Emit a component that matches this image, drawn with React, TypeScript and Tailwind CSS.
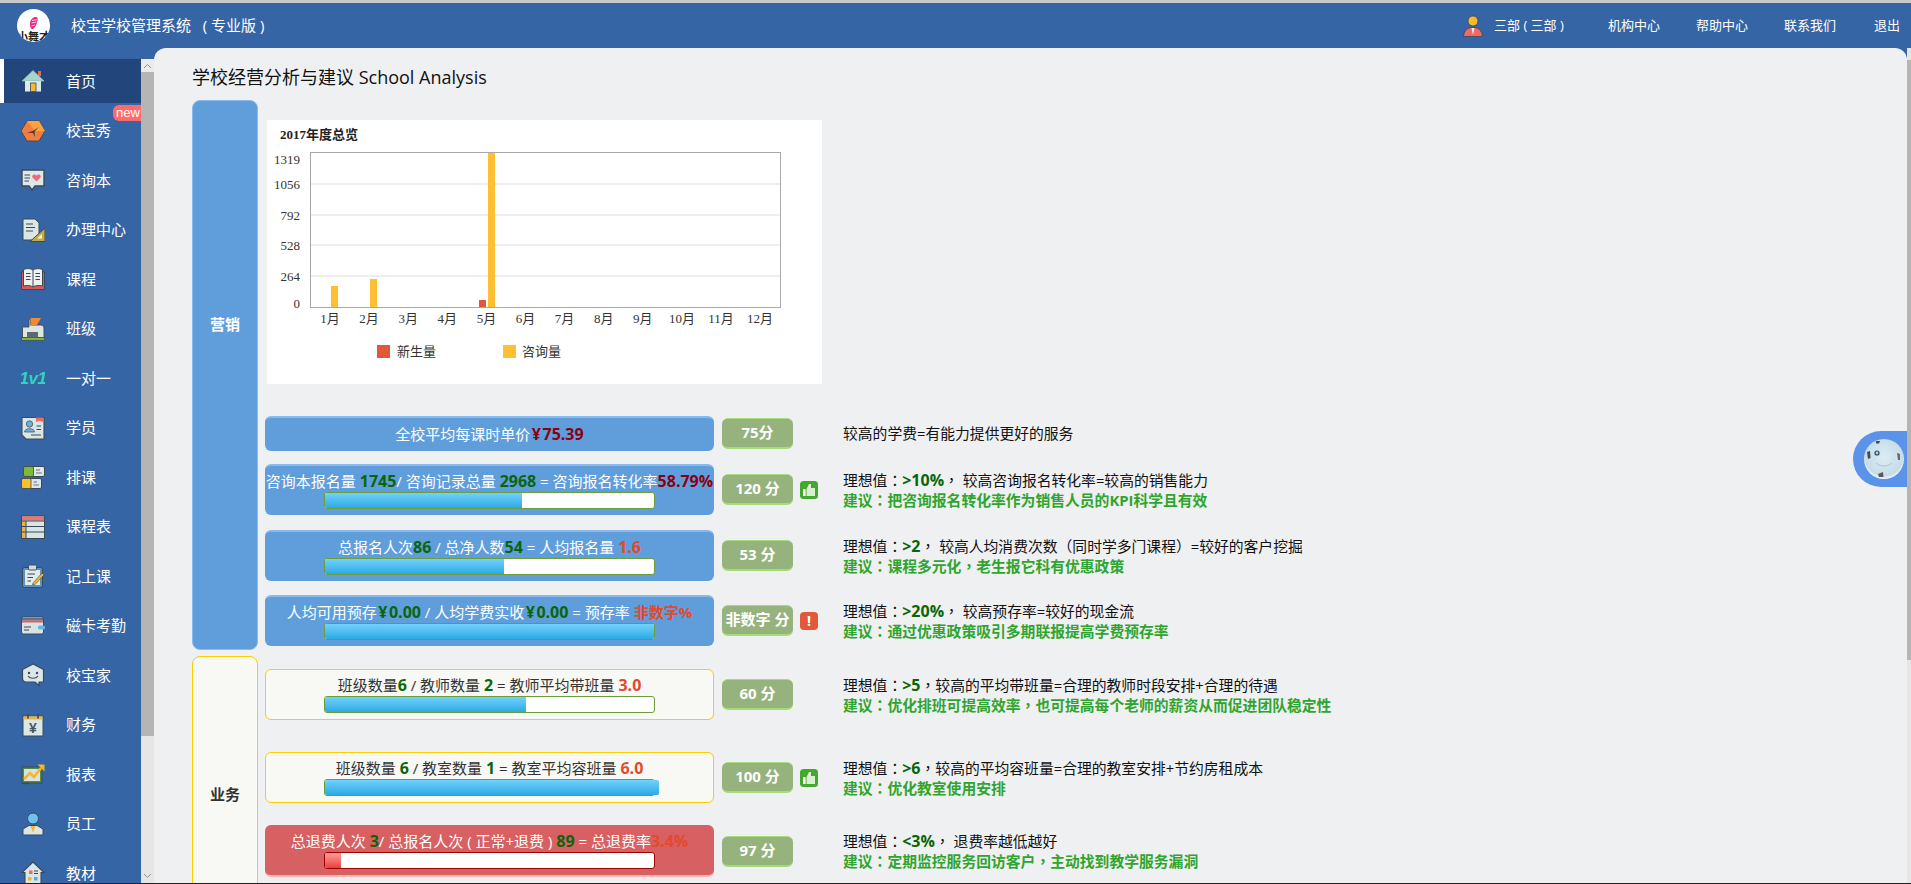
import React from 'react';

const CJK = '"Open Sans","Noto Sans CJK SC",sans-serif';

const Ico: React.FC<{ children: React.ReactNode }> = ({ children }) => (
  <svg viewBox="0 0 24 24" width={24} height={24} className="shrink-0">
    {children}
  </svg>
);

const ink = '#3c4858';

const icons: Record<string, React.ReactNode> = {
  home: (
    <Ico>
      <rect x="17" y="2" width="3" height="5" fill="#e8685f" />
      <path d="M12 1.5 L23 12 H1 Z" fill="#a9d3cc" stroke="#8fb9b3" strokeWidth="0.8" />
      <rect x="4" y="12" width="16" height="10.5" fill="#dfe9e6" />
      <rect x="9.5" y="14" width="5.5" height="8.5" fill="#f6bb2e" stroke={ink} strokeWidth="0.8" />
    </Ico>
  ),
  show: (
    <Ico>
      <path d="M6 2 H18 L24 12 L18 22 H6 L0 12 Z" fill="#f47c3c" stroke={ink} strokeWidth="0.9" />
      <path d="M6 2 H18 L24 12 H14 Z" fill="#f9a23f" />
      <path d="M12 12 L6 13.5 L12 14 L14 18 L13.5 12.5 L18 8 Z" fill="#3d3a45" />
    </Ico>
  ),
  chat: (
    <Ico>
      <path d="M1 2 H23 V18 H14 L11 22 L8 18 H1 Z" fill="#dbe9e8" stroke={ink} strokeWidth="1.4" />
      <path d="M15.5 13.5 L11.5 9.5 C10 7 13.5 5 15.5 7.6 C17.5 5 21 7 19.5 9.5 Z" fill="#f0697a" />
      <path d="M3.5 7 H9 M3.5 10 H9 M3.5 13 H8" stroke={ink} strokeWidth="1" />
    </Ico>
  ),
  deal: (
    <Ico>
      <path d="M2 1 H14 L18 5 V22 H2 Z" fill="#dbe7e5" stroke={ink} strokeWidth="1" />
      <path d="M5 6 H12 M5 9.5 H14 M5 13 H12" stroke={ink} strokeWidth="1.1" />
      <path d="M24 10 V23.5 H9 Z" fill="#c6ab45" stroke={ink} strokeWidth="1" />
      <path d="M21 16 V20.5 H16 Z" fill="#eef0ee" />
    </Ico>
  ),
  book: (
    <Ico>
      <path d="M0.5 5 H23.5 V22.5 H0.5 Z" fill="#d45a5e" stroke={ink} strokeWidth="1" />
      <path d="M2.5 2.5 C6 1 10 1.5 12 3 C14 1.5 18 1 21.5 2.5 V19 C18 18 14 18.5 12 20 C10 18.5 6 18 2.5 19 Z" fill="#eef2ee" stroke={ink} strokeWidth="1" />
      <path d="M12 3 V20 M5 6.5 H9.5 M5 9.5 H9.5 M5 12.5 H9.5 M14.5 6.5 H19 M14.5 9.5 H19 M14.5 12.5 H19" stroke={ink} strokeWidth="1" />
    </Ico>
  ),
  cls: (
    <Ico>
      <rect x="0.5" y="20.5" width="23" height="3" fill="#7cb83b" stroke={ink} strokeWidth="0.7" />
      <path d="M1.5 20.5 V10 H8 V2 H9.5 V8 H20 C22 8 23 10 23 12 V20.5 Z" fill="#dbe7e0" stroke={ink} strokeWidth="0.9" />
      <path d="M9.5 1 H20 L16 8 H9.5 Z" fill="#f08a32" />
      <rect x="6" y="15" width="11" height="5.5" fill="#5d6a72" />
    </Ico>
  ),
  one: (
    <Ico>
      <text x="12" y="18" textAnchor="middle" fontSize="17" fontWeight="800" fontStyle="italic" fill="#35d0c6" stroke="#2f6f86" strokeWidth="0.9" paintOrder="stroke" style={{ fontFamily: '"Liberation Sans",sans-serif', letterSpacing: '-0.5px' }}>1v1</text>
    </Ico>
  ),
  student: (
    <Ico>
      <path d="M1 1.5 H23 V23 H5 L1 19 Z" fill="#dbe7e6" stroke={ink} strokeWidth="1.1" />
      <circle cx="8.5" cy="8" r="3.2" fill="#6eaedd" stroke={ink} strokeWidth="0.7" />
      <path d="M3.5 16 C3.5 11.5 13.5 11.5 13.5 16 Z" fill="#6eaedd" stroke={ink} strokeWidth="0.7" />
      <path d="M15 1.5 H22 V6 L18.5 4.8 L15 6 Z" fill="#ef6a62" />
      <path d="M15.5 10 H20 M15.5 13.5 H20 M10 19 H20" stroke={ink} strokeWidth="1.1" />
    </Ico>
  ),
  sched: (
    <Ico>
      <rect x="2.5" y="1.5" width="21" height="10" rx="1.5" fill="#dfe8e8" stroke={ink} strokeWidth="1" />
      <rect x="2.5" y="1.5" width="10" height="10" rx="1.5" fill="#7dbb37" stroke={ink} strokeWidth="0.8" />
      <path d="M15 5 H19 M15 8 H21" stroke="#6a7580" strokeWidth="1.2" />
      <rect x="0.5" y="13.5" width="20" height="10" rx="1.5" fill="#dfe8e8" stroke={ink} strokeWidth="1" />
      <rect x="0.5" y="13.5" width="9.5" height="10" rx="1.5" fill="#fbc02d" stroke={ink} strokeWidth="0.8" />
      <path d="M12.5 17 H16 M12.5 20 H18" stroke="#6a7580" strokeWidth="1.2" />
    </Ico>
  ),
  table: (
    <Ico>
      <rect x="0.5" y="1" width="23" height="22.5" fill="#d6e6e5" stroke={ink} strokeWidth="1" />
      <rect x="1" y="1.5" width="22" height="4" fill="#f4706a" />
      <rect x="1" y="5.5" width="4" height="17.5" fill="#e8b544" />
      <path d="M1 6 H23 M1 11.5 H23 M1 17 H23 M5 6 V23" stroke={ink} strokeWidth="1" />
    </Ico>
  ),
  record: (
    <Ico>
      <rect x="1.5" y="3.5" width="20" height="20" rx="2" fill="#5b93bf" stroke={ink} strokeWidth="1" />
      <rect x="4" y="6" width="15" height="15" fill="#e3eaea" />
      <rect x="7.5" y="1" width="8" height="5" rx="1" fill="#cfdcdc" stroke={ink} strokeWidth="0.9" />
      <path d="M6.5 10 H14 M6.5 13.5 H12 M6.5 17 H10" stroke={ink} strokeWidth="1.1" />
      <path d="M12 19 L21 9 L23 11 L14 20.5 L11.5 21 Z" fill="#f3b62c" stroke={ink} strokeWidth="0.6" />
    </Ico>
  ),
  card: (
    <Ico>
      <rect x="0.5" y="3" width="22" height="17" rx="2" fill="#d8e3e2" stroke={ink} strokeWidth="1" />
      <rect x="1" y="6.5" width="21" height="2" fill="#f0565c" />
      <rect x="1" y="4" width="21" height="2.5" fill="#66727c" />
      <path d="M3 13 H10 M3 16 H8" stroke={ink} strokeWidth="1.1" />
      <rect x="17" y="11.5" width="7" height="4" rx="1.5" fill="#62b5de" />
    </Ico>
  ),
  family: (
    <Ico>
      <path d="M12 1 L22.5 6.5 V19 H18 V22.5 L14 19 H5 C2.5 19 1.5 17.5 1.5 15 V6.5 Z" fill="#dbe7e6" stroke={ink} strokeWidth="1.2" />
      <circle cx="8" cy="10" r="1.2" fill={ink} />
      <circle cx="16" cy="10" r="1.2" fill={ink} />
      <path d="M7 13 C9 16 15 16 17 13" fill="none" stroke={ink} strokeWidth="1.2" />
    </Ico>
  ),
  finance: (
    <Ico>
      <rect x="2" y="3" width="20" height="20" fill="#dce8e5" stroke={ink} strokeWidth="1" />
      <rect x="2.5" y="3.5" width="19" height="3" fill="#e8b544" />
      <path d="M7 1 V5.5 M17 1 V5.5" stroke={ink} strokeWidth="1.6" />
      <text x="12" y="20" textAnchor="middle" fontSize="14" fontWeight="700" fill="#4a5560" style={{ fontFamily: '"Liberation Sans",sans-serif' }}>¥</text>
    </Ico>
  ),
  report: (
    <Ico>
      <rect x="1" y="5" width="20" height="16" fill="#4f8d45" stroke={ink} strokeWidth="1" />
      <rect x="3" y="7" width="16" height="12" fill="#d8e3e0" />
      <path d="M3 17 L9 11 L13 15 L20 6" fill="none" stroke="#f6b52b" strokeWidth="2.6" />
      <path d="M16.5 2.5 H23.5 V9.5 Z" fill="#f6b52b" />
      <path d="M1 21.5 H8" stroke={ink} strokeWidth="1.4" />
    </Ico>
  ),
  staff: (
    <Ico>
      <circle cx="12" cy="6.5" r="5.5" fill="#6ec2ef" stroke={ink} strokeWidth="1" />
      <path d="M2 23 V17 L8 13.5 H16 L22 17 V23 Z" fill="#dbe7e5" stroke={ink} strokeWidth="1" />
      <path d="M9.5 14 H14.5 L12 20.5 Z" fill="#f1b82d" />
    </Ico>
  ),
  material: (
    <Ico>
      <path d="M12 1 L23 11.5 H20 V24 H4 V11.5 H1 Z" fill="#dbe7e5" stroke={ink} strokeWidth="1.1" />
      <rect x="8" y="9.5" width="3.5" height="3.5" fill="#ef6a62" />
      <path d="M13 10 H17 M13 12.5 H17" stroke={ink} strokeWidth="1" />
      <rect x="7" y="16" width="3.5" height="3.5" fill="#f1b82d" />
      <rect x="13" y="16" width="3.5" height="3.5" fill="#5aa9de" />
    </Ico>
  ),
};

const menu = [
  { key: 'home', label: '首页' },
  { key: 'show', label: '校宝秀' },
  { key: 'chat', label: '咨询本' },
  { key: 'deal', label: '办理中心' },
  { key: 'book', label: '课程' },
  { key: 'cls', label: '班级' },
  { key: 'one', label: '一对一' },
  { key: 'student', label: '学员' },
  { key: 'sched', label: '排课' },
  { key: 'table', label: '课程表' },
  { key: 'record', label: '记上课' },
  { key: 'card', label: '磁卡考勤' },
  { key: 'family', label: '校宝家' },
  { key: 'finance', label: '财务' },
  { key: 'report', label: '报表' },
  { key: 'staff', label: '员工' },
  { key: 'material', label: '教材' },
];

const Sidebar: React.FC = () => (
  <aside className="relative w-[154px] shrink-0 flex pt-[11px] overflow-hidden">
    <ul className="w-[141px] shrink-0 flex flex-col gap-[5.5px] overflow-hidden">
      {menu.map((m, i) => (
        <li
          key={m.key}
          className={`relative flex items-center h-[44px] shrink-0 text-[15px] text-white ${i === 0 ? 'bg-[#22467c] border-l-4 border-white pl-[17px]' : 'pl-[21px]'}`}
        >
          {icons[m.key]}
          <span className="ml-[21px]">{m.label}</span>
        </li>
      ))}
    </ul>
    <div className="absolute left-[113px] top-[57px] w-[28px] h-[16px] rounded-l-[6px] bg-[#ff6b6b] text-white text-[13px] leading-[15px] pl-[3px] font-['Liberation_Sans']">
      new
    </div>
    <div className="w-[13px] flex flex-col bg-[#e6e6e6]">
      <div className="h-[13px] flex items-center justify-center bg-[#ebebeb]">
        <svg width="9" height="6" viewBox="0 0 9 6"><path d="M1 5 L4.5 1.5 L8 5" fill="none" stroke="#909090" /></svg>
      </div>
      <div className="h-[664px] bg-[#b5b5b5]" />
      <div className="flex-1 flex items-end justify-center pb-[4px]">
        <svg width="9" height="6" viewBox="0 0 9 6"><path d="M1 1 L4.5 4.5 L8 1" fill="none" stroke="#909090" /></svg>
      </div>
    </div>
  </aside>
);

const Logo: React.FC = () => (
  <div className="relative w-[33px] h-[33px] rounded-full bg-white overflow-hidden">
    <svg viewBox="0 0 33 33" width={33} height={33} className="absolute inset-0">
      <path d="M13 15 C13 11 15.5 8.5 18 8 C20.5 7.5 21 9 20.5 11.5 C20 15 18 19 16 20 C14 20.5 13 18 13 15 Z" fill="#e6267f" />
      <path d="M15 11.5 L20 10.5 M14.5 14 L19.5 13 M14.5 17 L18 16" stroke="#fff" strokeWidth="0.8" />
    </svg>
    <span className="absolute left-0 right-0 top-[22px] text-center text-[11px] leading-[12px] font-bold text-[#2a201a] whitespace-nowrap">小舞才</span>
  </div>
);

const Header: React.FC = () => (
  <header className="h-[45px] shrink-0 flex items-center bg-[#3665a6] text-white">
    <div className="ml-[17px]"><Logo /></div>
    <span className="ml-[21px] text-[15px] whitespace-pre">校宝学校管理系统   ( 专业版 )</span>
    <div className="ml-auto flex items-center text-[13px]">
      <svg viewBox="0 0 20 22" width={20} height={22}>
        <circle cx="10" cy="6" r="5" fill="#f9b92b" stroke={ink} strokeWidth="0.8" />
        <path d="M0.5 21.5 C1 15 5 13 8 12.5 H12 C15 13 19 15 19.5 21.5 Z" fill="#ef6a62" stroke={ink} strokeWidth="0.8" />
        <path d="M8.5 13 H11.5 L10 20 Z" fill="#e6ecec" />
      </svg>
      <span className="ml-[11px] w-[114px] whitespace-pre">三部 ( 三部 )</span>
      <span className="w-[88px]">机构中心</span>
      <span className="w-[88px]">帮助中心</span>
      <span className="w-[90px]">联系我们</span>
      <span className="w-[37px]">退出</span>
    </div>
  </header>
);

type Tone = 'blue' | 'yellow' | 'red';

const boxTone: Record<Tone, string> = {
  blue: 'bg-[#5f9edb] border-t-2 border-[#8ab9ec] text-white',
  yellow: 'bg-[#f8f8f4] border border-[#ffcc00] text-[#333333]',
  red: 'bg-[#d66062] border-b-2 border-[#ffb3b3] text-white',
};

const Bar: React.FC<{ pct: number; tone: Tone; over?: boolean }> = ({ pct, tone, over }) => (
  <div className={`relative h-[17px] w-[331px] mx-auto rounded-[3px] bg-white border ${tone === 'red' ? 'border-[#a00000]' : 'border-[#6a9e3a]'}`}>
    <div
      className={`absolute left-0 top-0 bottom-0 rounded-l-[2px] ${tone === 'red' ? 'bg-linear-to-b from-[#ff9a9a] to-[#e73f3f]' : 'bg-linear-to-b from-[#6fd2fb] to-[#29a9e4]'} ${over ? 'rounded-r-[2px]' : ''}`}
      style={{ width: `${pct}%` }}
    />
  </div>
);

const G: React.FC<{ children: React.ReactNode }> = ({ children }) => <b className="font-bold text-[16px] text-[#086608]">{children}</b>;
const D: React.FC<{ children: React.ReactNode }> = ({ children }) => <b className="font-bold text-[16px] text-[#8a0010]">{children}</b>;
const R: React.FC<{ children: React.ReactNode }> = ({ children }) => <b className="font-bold text-[16px] text-[#e2492d]">{children}</b>;
const Yen: React.FC = () => <span className="mx-[1.5px]">¥</span>;

// 标点居中，和原图的字体一致
const P: React.FC<{ children: React.ReactNode }> = ({ children }) => <span className="font-['Noto_Sans_CJK_TC']">{children}</span>;

const punct = (s: string) => s.split(/([：，])/).map((part, i) => (i % 2 ? <P key={i}>{part}</P> : part));

const Thumb: React.FC = () => (
  <svg viewBox="0 0 18 18" width={18} height={18}>
    <rect x="0" y="0" width="18" height="18" rx="3.5" fill="#44a82e" />
    <rect x="3" y="8" width="2.6" height="7" fill="#fff" />
    <path d="M6.5 8 L9 3 H11 V7 H15 V15 H6.5 Z" fill="#d9efd2" />
  </svg>
);

const Warn: React.FC = () => (
  <div className="w-[18px] h-[18px] rounded-[4px] bg-[#e2583a] text-white text-center font-bold text-[14px] leading-[18px]">!</div>
);

const Advice: React.FC<{ top: React.ReactNode; tip?: string }> = ({ top, tip }) => (
  <div className="ml-[25px] text-[14.8px] leading-[19px] text-[#111111] whitespace-nowrap">
    <div>{top}</div>
    {tip && <div className="font-bold text-[#2fa52f]">{punct(tip)}</div>}
  </div>
);

const Row: React.FC<{
  tone: Tone;
  top: string;
  h: number;
  text: React.ReactNode;
  pct?: number;
  over?: boolean;
  score: string;
  mark?: 'up' | 'warn';
  advice: React.ReactNode;
}> = ({ tone, top, h, text, pct, over, score, mark, advice }) => (
  <div className={`flex items-center ${top}`}>
    <div className={`w-[449px] rounded-[6px] flex flex-col justify-center text-[15px] text-center whitespace-nowrap ${boxTone[tone]}`} style={{ height: h }}>
      <div className="-mt-[1px] mb-[1px] h-[20px] leading-[20px]">{text}</div>
      {pct !== undefined && <Bar pct={pct} tone={tone} over={over} />}
    </div>
    <div className="ml-[8px] w-[71px] h-[31px] rounded-[6px] bg-[#96b27d] border-t border-b-2 border-[#a5dc78] text-white font-bold text-[15px] leading-[27px] text-center whitespace-nowrap">
      {score}
    </div>
    <div className="w-[25px] pl-[7px] shrink-0">
      {mark === 'up' && <Thumb />}
      {mark === 'warn' && <Warn />}
    </div>
    {advice}
  </div>
);

const Chart: React.FC = () => {
  const months = ['1月', '2月', '3月', '4月', '5月', '6月', '7月', '8月', '9月', '10月', '11月', '12月'];
  const font = '"Liberation Serif","Noto Sans CJK SC",serif';
  return (
    <div className="ml-[2px] w-[555px] h-[264px] bg-white">
      <svg width={555} height={264} viewBox="267 120 555 264" style={{ fontFamily: font }}>
        <text x={280} y={139} fontSize={13} fontWeight={700} fill="#222">2017年度总览</text>
        {[184, 215, 245, 276].map(y => (
          <line key={y} x1={311} x2={780} y1={y} y2={y} stroke="#dddddd" />
        ))}
        <rect x={310.5} y={152.5} width={470} height={155} fill="none" stroke="#a8a8a8" />
        {[['1319', 164], ['1056', 189], ['792', 220], ['528', 250], ['264', 281], ['0', 308]].map(([t, y]) => (
          <text key={t} x={300} y={y} textAnchor="end" fontSize={13} fill="#333">{t}</text>
        ))}
        <rect x={331} y={286} width={7} height={21} fill="#ffbf33" />
        <rect x={370} y={279} width={7} height={28} fill="#ffbf33" />
        <rect x={479} y={300} width={7} height={7} fill="#e2583a" />
        <rect x={488} y={153} width={7} height={154} fill="#ffbf33" />
        {months.map((m, i) => (
          <text key={m} x={330 + i * 39.1} y={323} textAnchor="middle" fontSize={13} fill="#333">{m}</text>
        ))}
        <rect x={377} y={345} width={13} height={13} fill="#e2583a" />
        <text x={397} y={356} fontSize={13} fill="#333" style={{ fontFamily: '"Noto Sans CJK SC",sans-serif' }}>新生量</text>
        <rect x={503} y={345} width={13} height={13} fill="#ffbf33" />
        <text x={522} y={356} fontSize={13} fill="#333" style={{ fontFamily: '"Noto Sans CJK SC",sans-serif' }}>咨询量</text>
      </svg>
    </div>
  );
};

const Robot: React.FC = () => (
  <div className="absolute right-0 top-[383px] w-[54px] h-[56px] rounded-l-[28px] bg-[#5b93ea] flex items-center pl-[11px]">
    <svg viewBox="0 0 40 40" width={40} height={40}>
      <defs>
        <radialGradient id="ball" cx="50%" cy="45%" r="55%">
          <stop offset="0%" stopColor="#dcecf3" />
          <stop offset="85%" stopColor="#c6dde9" />
          <stop offset="100%" stopColor="#f4f8fa" />
        </radialGradient>
      </defs>
      <circle cx="20" cy="20" r="20" fill="url(#ball)" />
      <circle cx="13" cy="14" r="2.6" fill="#2d4a5a" />
      <circle cx="13" cy="14" r="1.4" fill="#8fe0f0" />
      <path d="M3 13 L6 12 L6.5 19 L4 20 Z" fill="#4a4a4a" />
      <path d="M33 14 L36 15 L36 21 L34 21 Z" fill="#6a6a6a" />
      <path d="M12 2 L16 2 L15 4.5 L12 4.5 Z" fill="#4a4a4a" />
      <path d="M14 35 L19 33 L19.5 38 L15 38 Z" fill="#5a5a5a" />
      <path d="M12 24 C16 28 24 28 28 24" fill="none" stroke="#a9c6d4" strokeWidth="1" />
    </svg>
  </div>
);

const Main: React.FC = () => (
  <main className="relative flex-1 min-w-0 bg-[#eff0f2] rounded-tl-[12px] rounded-tr-[12px] overflow-hidden pl-[38px]">
    <h1 className="pt-[18px] text-[18px] leading-[22px] font-normal text-[#111111] whitespace-nowrap">学校经营分析与建议 School Analysis</h1>
    <section className="flex mt-[12px] h-[550px]">
      <div className="w-[66px] shrink-0 rounded-[8px] bg-[#5f9edb] border border-[#8ab9ec] pt-[212px] text-center text-white text-[15px] font-bold">
        营销
      </div>
      <div className="ml-[7px]">
        <div className="mt-[20px]"><Chart /></div>
        <Row
          tone="blue" top="mt-[32px]" h={35}
          text={<>全校平均每课时单价<D><Yen />75.39</D></>}
          score="75分"
          advice={<Advice top="较高的学费=有能力提供更好的服务" />}
        />
        <Row
          tone="blue" top="mt-[13px]" h={51} pct={60}
          text={<>咨询本报名量 <G>1745</G>/ 咨询记录总量 <G>2968</G> = 咨询报名转化率<D>58.79%</D></>}
          score="120 分" mark="up"
          advice={<Advice top={<>理想值<P>：</P><G>&gt;10%</G><P>，</P> 较高咨询报名转化率=较高的销售能力</>} tip="建议：把咨询报名转化率作为销售人员的KPI科学且有效" />}
        />
        <Row
          tone="blue" top="mt-[15px]" h={51} pct={54.5}
          text={<>总报名人次<G>86</G> / 总净人数<G>54</G> = 人均报名量 <R>1.6</R></>}
          score="53 分"
          advice={<Advice top={<>理想值<P>：</P><G>&gt;2</G><P>，</P> 较高人均消费次数（同时学多门课程）=较好的客户挖掘</>} tip="建议：课程多元化，老生报它科有优惠政策" />}
        />
        <Row
          tone="blue" top="mt-[14px]" h={51} pct={100} over
          text={<>人均可用预存<G><Yen />0.00</G> / 人均学费实收<G><Yen />0.00</G> = 预存率 <b className="font-bold text-[#e2492d]">非数字%</b></>}
          score="非数字 分" mark="warn"
          advice={<Advice top={<>理想值<P>：</P><G>&gt;20%</G><P>，</P> 较高预存率=较好的现金流</>} tip="建议：通过优惠政策吸引多期联报提高学费预存率" />}
        />
      </div>
    </section>
    <section className="flex mt-[6px] h-[300px]">
      <div className="w-[66px] shrink-0 rounded-[8px] bg-[#f8f8f4] border border-[#ffcc00] pt-[126px] text-center text-[#333333] text-[15px] font-bold">
        业务
      </div>
      <div className="ml-[7px]">
        <Row
          tone="yellow" top="mt-[13px]" h={51} pct={61}
          text={<>班级数量<G>6</G> / 教师数量 <G>2</G> = 教师平均带班量 <R>3.0</R></>}
          score="60 分"
          advice={<Advice top={<>理想值<P>：</P><G>&gt;5</G><P>，</P>较高的平均带班量=合理的教师时段安排+合理的待遇</>} tip="建议：优化排班可提高效率，也可提高每个老师的薪资从而促进团队稳定性" />}
        />
        <Row
          tone="yellow" top="mt-[32px]" h={51} pct={101.5} over
          text={<>班级数量 <G>6</G> / 教室数量 <G>1</G> = 教室平均容班量 <R>6.0</R></>}
          score="100 分" mark="up"
          advice={<Advice top={<>理想值<P>：</P><G>&gt;6</G><P>，</P>较高的平均容班量=合理的教室安排+节约房租成本</>} tip="建议：优化教室使用安排" />}
        />
        <Row
          tone="red" top="mt-[22px]" h={52} pct={5}
          text={<>总退费人次 <G>3</G>/ 总报名人次 ( 正常+退费 ) <G>89</G> = 总退费率<R>3.4%</R></>}
          score="97 分"
          advice={<Advice top={<>理想值<P>：</P><G>&lt;3%</G><P>，</P> 退费率越低越好</>} tip="建议：定期监控服务回访客户，主动找到教学服务漏洞" />}
        />
      </div>
    </section>
    <Robot />
  </main>
);

export default function App() {
  return (
    <div className="h-screen overflow-hidden flex flex-col bg-[#3665a6] border-b border-[#222222]" style={{ fontFamily: CJK }}>
      <div className="h-[3px] shrink-0 bg-[#c9c9c9]" />
      <Header />
      <div className="flex-1 min-h-0 flex">
        <Sidebar />
        <Main />
        <div className="w-[4px] shrink-0 flex flex-col bg-[#e6e6e6]">
          <div className="h-[12px]" />
          <div className="h-[600px] bg-[#b5b5b5]" />
        </div>
      </div>
    </div>
  );
}
